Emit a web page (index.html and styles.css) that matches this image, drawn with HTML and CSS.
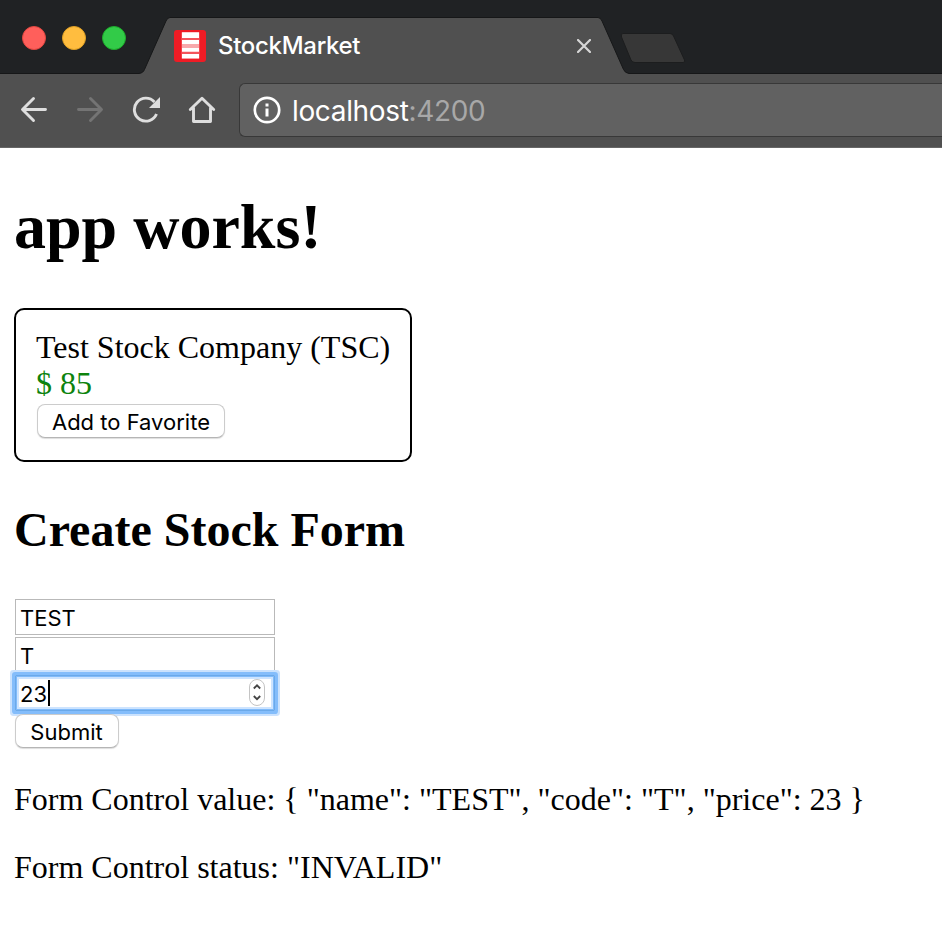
FILE: index.html
```html
<!DOCTYPE html>
<html lang="en">
<head>
<meta charset="utf-8">
<title>StockMarket</title>
<link rel="stylesheet" href="styles.css">
</head>
<body>
<header class="browser">
  <div class="tabstrip">
    <div class="lights"><span class="light red"></span><span class="light amber"></span><span class="light green"></span></div>
    <div class="tab">
      <svg class="tab-shape" width="490" height="58" viewBox="0 0 490 58"><path d="M0 57.5C3 57 4.500 56 5.500 53.500L27 5Q28.500 1.500 31 1.500H459Q461.500 1.500 463 5L484.500 53.500Q486 57 490 57.500V58H0Z" fill="#505050"/><path d="M0 57.5C3 57 4.500 56 5.500 53.500L27 5Q28.500 1.500 31 1.500H459Q461.500 1.500 463 5L484.500 53.500Q486 57 490 57.500" fill="none" stroke="#161718"/></svg>
      <svg class="favicon" width="32" height="32" viewBox="0 0 32 32"><rect width="32" height="32" rx="3" fill="#ee1c25"/><path d="M7.300 2.300h18.400v26.200H7.300z" fill="#f4545b"/><path d="M8 2.300h17v5.700H8zM8 10h17v4H8zM8 18h17v3.700H8zM8 24h17v4.500H8z" fill="#fff"/><path d="M8 14h17v4H8z" fill="#f8a9ac"/></svg>
      <span class="tab-title">StockMarket</span>
      <svg class="close" width="14" height="14" viewBox="0 0 14 14"><path d="M1 1l12 12M13 1L1 13" stroke="#d6d6d6" stroke-width="2.2" stroke-linecap="round"/></svg>
    </div>
    <svg class="new-tab" width="66" height="32" viewBox="0 0 66 32"><path d="M3 1.500H50Q52.500 1.500 53.500 4L64.500 28Q65.500 30.500 63 30.500H15Q12.500 30.500 11 28L1.500 5Q0.500 1.500 3 1.500Z" fill="#373737" stroke="#1c1d1e"/></svg>
  </div>
  <nav class="toolbar">
    <svg width="28" height="28" viewBox="0 0 28 28"><path d="M25.500 14.500H3M13.500 3.500L2.500 14.500 13.500 25.500" class="line"/></svg>
    <svg class="dim" width="28" height="28" viewBox="0 0 28 28"><path d="M2.500 14.500H25M14.500 3.500L25.500 14.500 14.500 25.500" class="line"/></svg>
    <svg width="28" height="28" viewBox="0 0 28 28"><path d="M24.500 19A11.500 11.500 0 1 1 22.500 7" class="line flat"/><path d="M28 2v11H17Z" fill="#dedede"/></svg>
    <svg width="28" height="28" viewBox="0 0 28 28"><path d="M2.300 14.500L14 3.300 25.700 14.500M5.500 13V26.500H22.500V13" class="line"/></svg>
    <div class="address">
      <svg width="28" height="28" viewBox="0 0 28 28"><circle cx="14" cy="14" r="12.200" fill="none" stroke="#fff" stroke-width="2.700"/><path d="M12.500 7.500h3v3h-3zM12.500 12.500h3v8h-3z" fill="#fff"/></svg>
      <span class="url">localhost<span class="port">:4200</span></span>
    </div>
  </nav>
</header>
<main>
  <h1>app works!</h1>
  <section class="stock">
    <div>Test Stock Company (TSC)</div>
    <div class="price">$ 85</div>
    <button class="favorite">Add to Favorite</button>
  </section>
  <h2>Create Stock Form</h2>
  <form>
    <div class="field">TEST</div>
    <div class="field">T</div>
    <div class="field focused"><span>23</span><i class="caret"></i>
      <svg class="spinner" width="18" height="30" viewBox="0 0 18 30"><rect x="1.500" y="1.500" width="15" height="26" rx="7.500" fill="#fff" stroke="#c4c4c4"/><path d="M5.800 10.500L9 7.300 12.200 10.500M5.800 18L9 21.200 12.200 18" fill="none" stroke="#444" stroke-width="1.800"/></svg>
    </div>
    <button type="button" class="submit">Submit</button>
  </form>
  <p>Form Control value: { "name": "TEST", "code": "T", "price": 23 }</p>
  <p>Form Control status: "INVALID"</p>
</main>
</body>
</html>
```
FILE: styles.css
```css
* { box-sizing: border-box; }
body { margin: 0; background: #fff; color: #000; font: 32px/36px "Liberation Serif", serif; overflow: hidden; }
svg { display: block; flex: none; }
.browser { height: 148px; background: #505050; font-family: Inter, sans-serif; }
.tabstrip { height: 74px; background: #202224; border-bottom: 1px solid #161718; display: flex; align-items: flex-start; }
.lights { display: flex; gap: 16px; padding: 26px 0 0 22px; width: 139px; flex: none; }
.light { width: 24px; height: 24px; border-radius: 50%; }
.red { background: #ff5f5b; border: 1px solid #e2463f; }
.amber { background: #ffbd3f; border: 1px solid #dfa023; }
.green { background: #32cb48; border: 1px solid #1dad2b; }
.tab { position: relative; width: 490px; height: 58px; margin-top: 16px; padding: 14px 38px 0 35px; display: flex; flex: none; }
.tab-shape { position: absolute; left: 0; top: 0; }
.favicon, .tab-title, .close { position: relative; }
.tab-title { margin-left: 12px; font-size: 24px; line-height: 32px; font-weight: 500; letter-spacing: -.3px; color: #fff; }
.close { margin: 9px 0 0 auto; }
.new-tab { margin: 32px 0 0 -9px; }
.toolbar { height: 74px; padding: 9px 0 0 20px; border-bottom: 1px solid #666; display: flex; gap: 28px; }
.toolbar > svg { margin-top: 12px; }
.line { fill: none; stroke: #dedede; stroke-width: 2.9; stroke-linecap: round; stroke-linejoin: round; }
.flat { stroke-linecap: butt; }
.dim .line { stroke: #747474; }
.address { height: 54px; flex: 1; margin-left: -5px; border: 1px solid #383838; border-right: 0; border-radius: 6px 0 0 6px; background: #616161; display: flex; align-items: center; padding-left: 13px; color: #fff; }
.url { margin-left: 11px; padding-top: 2px; font-size: 28px; letter-spacing: -.35px; white-space: nowrap; }
.port { color: #a8a8a8; }
main { padding: 42px 14px 0; }
h1 { margin: 0; font-size: 64px; line-height: 74px; }
.stock { width: 398px; height: 154px; margin-top: 44px; padding: 19px 20px; border: 2px solid #000; border-radius: 10px; white-space: nowrap; }
.price { color: #0d830d; }
button { display: block; height: 34px; padding: 0; border: 1px solid #ccc; border-bottom-color: #b5b5b5; border-radius: 8px; background: #fff; box-shadow: 0 1px 1px #ddd; color: #000; font: 22px/32px Inter, sans-serif; padding-top: 1px; white-space: nowrap; }
.favorite { width: 188px; margin: 3px 0 0 1px; }
h2 { margin: 41px 0 0; font-size: 48px; line-height: 54px; }
form { margin: 42px 0 0 1px; width: 260px; display: flex; flex-direction: column; gap: 2px; }
.field { height: 36px; border: 1px solid #b9b9b9; background: #fff; padding-left: 4px; font: 22px/36px Inter, sans-serif; display: flex; }
.focused { position: relative; border-color: #6ba9e9; box-shadow: inset 0 0 0 1px #81bbfa, inset 0 0 0 3px #cde4ff; }
.focused::before { content: ""; position: absolute; inset: -1px; border-radius: 1px; box-shadow: 0 0 0 3px #84bdfb, 0 0 0 5px #cbe2fd; }
.caret { width: 2px; height: 26px; margin: 4px 0 0 1px; background: #000; }
.spinner { margin: 2px 8px 0 auto; }
.submit { width: 104px; margin-top: 1px; padding-right: 1px; position: relative; }
p { margin: 33px 0 0; white-space: nowrap; }
p + p { margin-top: 32px; }
```
